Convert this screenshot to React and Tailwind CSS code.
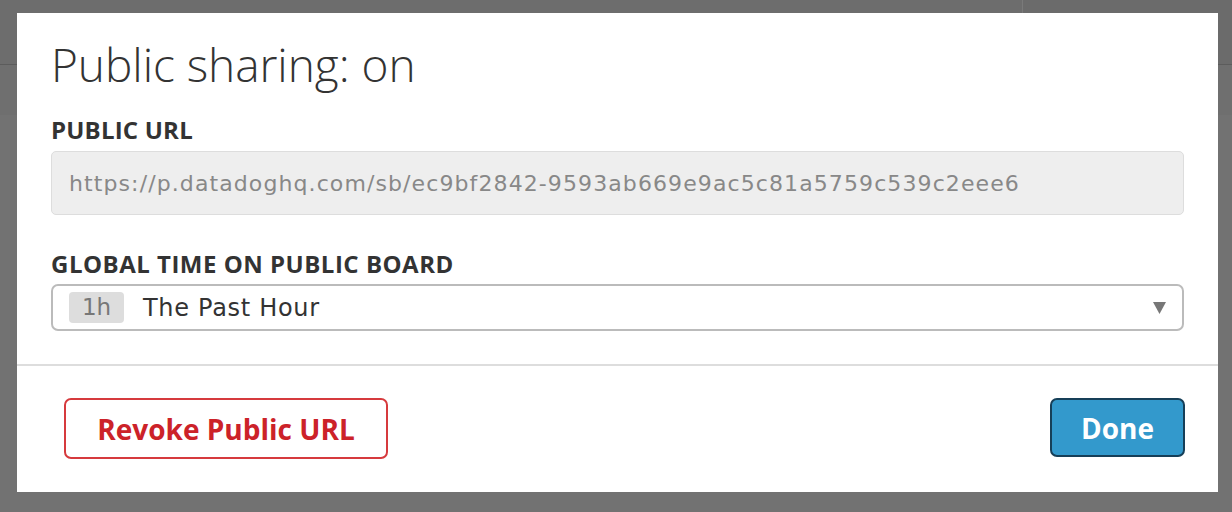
import React from "react";

function BackdropPage() {
  // the dimmed page that sits behind the modal
  return (
    <div className="flex flex-col h-full">
      <div className="flex h-[65px] bg-[#6d6d6d] border-b border-[#5c5c5c]">
        <div className="w-[1023px] border-r border-[#7a7a7a]" />
        <div className="flex-1 bg-[#6b6b6b]" />
      </div>
      <div className="h-[50px] bg-[#6f6f6f]" />
      <div className="flex-1 bg-[#727272]" />
    </div>
  );
}

function PublicShareModal() {
  const url =
    "https://p.datadoghq.com/sb/ec9bf2842-9593ab669e9ac5c81a5759c539c2eee6";

  return (
    <div className="absolute left-[17px] top-[13px] w-[1201px] h-[479px] bg-white flex flex-col font-['Open_Sans',sans-serif]">
      <div className="px-[34px] pt-[25px]">
        <h1 className="text-[46px] leading-[52px] font-light text-[#333] tracking-[-0.05px]">
          Public sharing: on
        </h1>

        <label className="block mt-[25px] text-[24px] leading-[30px] font-bold text-[#333] tracking-[0.2px]">
          PUBLIC URL
        </label>
        <div className="mt-[6px] h-[64px] flex items-center px-[17px] bg-[#eeeeee] border border-[#dddddd] rounded-[5px]">
          <span className="font-['DejaVu_Sans',sans-serif] text-[22px] text-[#888888] tracking-[1.1px]">
            {url}
          </span>
        </div>

        <label className="block mt-[34px] text-[24px] leading-[30px] font-bold text-[#333] tracking-[0.5px]">
          GLOBAL TIME ON PUBLIC BOARD
        </label>
        <div className="mt-[5px] h-[47px] flex items-center pl-[16px] pr-[16px] border-2 border-[#bbbbbb] rounded-[7px]">
          <span className="h-[31px] w-[55px] flex items-center justify-center bg-[#dddddd] rounded-[4px] font-['DejaVu_Sans',sans-serif] text-[23px] text-[#777777]">
            1h
          </span>
          <span className="ml-[19px] font-['DejaVu_Sans',sans-serif] text-[24px] text-[#333333] tracking-[0.7px]">
            The Past Hour
          </span>
          <svg
            className="ml-auto"
            width="13"
            height="12"
            viewBox="0 0 13 12"
          >
            <polygon points="0,0 13,0 6.5,12" fill="#777777" />
          </svg>
        </div>
      </div>

      <div className="mt-[33px] border-t-2 border-[#dddddd]" />

      <div className="flex items-start justify-between pl-[47px] pr-[33px] pt-[32px]">
        <button className="h-[61px] w-[324px] border-2 border-[#d63a3d] rounded-[7px] text-[28px] font-bold text-[#cc2229] bg-white">
          Revoke Public URL
        </button>
        <button className="h-[59px] w-[135px] border-2 border-[#163f58] rounded-[7px] text-[28px] font-bold text-white bg-[#3399cc]">
          Done
        </button>
      </div>
    </div>
  );
}

export default function App() {
  return (
    <div className="relative h-[512px] w-[1232px] overflow-hidden bg-[#717171]">
      <BackdropPage />
      <PublicShareModal />
    </div>
  );
}
